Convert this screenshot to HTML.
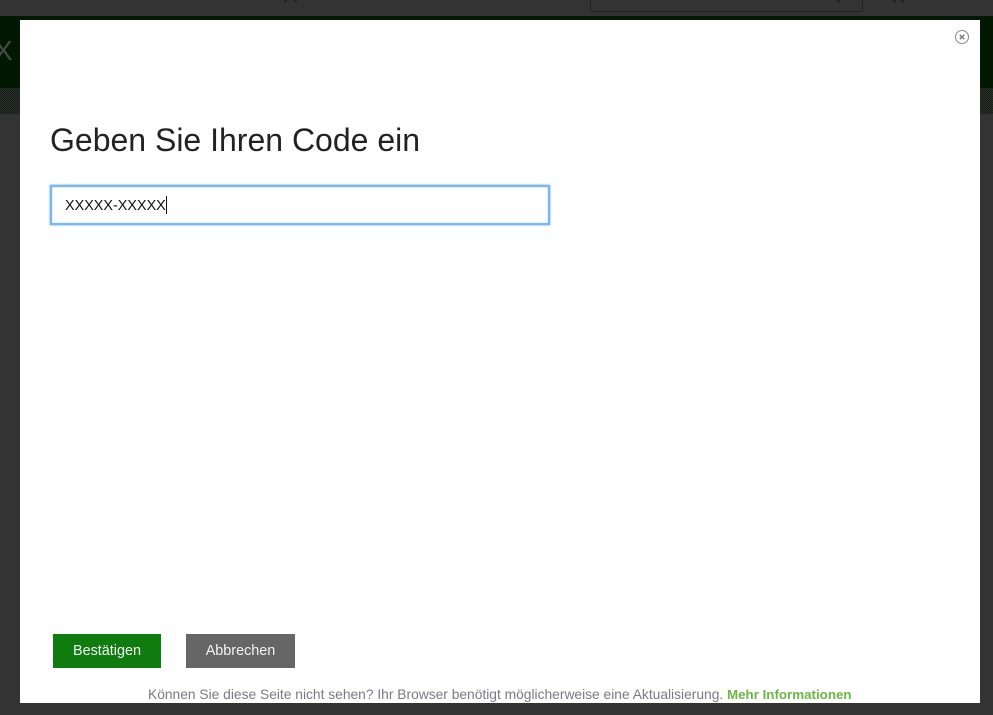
<!DOCTYPE html>
<html lang="de">
<head>
<meta charset="utf-8">
<title>Geben Sie Ihren Code ein</title>
<style>
html,body{margin:0;padding:0;width:993px;height:715px;overflow:hidden;background:#333;font-family:"Liberation Sans",sans-serif}
.abs{position:absolute}
#green{left:0;top:16px;width:993px;height:72px;background:#021802}
#dither{left:0;top:88px;width:993px;height:26px;background-color:#1c241c;background-image:conic-gradient(#282e28 25%,#161e16 0 50%,#282e28 0 75%,#161e16 0);background-size:2px 2px}
#search{left:590px;top:-2px;width:271px;height:12px;border:1px solid #222}
#x{left:-6px;top:35px;font-size:28px;line-height:32px;color:#444a44}
.dot{position:absolute;top:0;width:3px;height:2px;background:#222}
#modal{left:20px;top:20px;width:960px;height:683px;background:#fff;overflow:hidden}
h1{position:absolute;left:30px;top:101px;margin:0;font-weight:400;font-size:32px;line-height:38px;color:#222;white-space:nowrap}
#input{position:absolute;left:30px;top:165px;width:496px;height:36px;border:2px solid #7ab6f5;box-shadow:0 0 1px 1px #b9daf9,inset 0 0 2px #b9daf9;border-radius:1px;background:#fff}
#input span{position:absolute;left:13px;top:9px;font-size:14.4px;line-height:20px;color:#111;white-space:nowrap}
#caret{position:absolute;left:114px;top:9px;width:1px;height:18px;background:#111}
.btn{position:absolute;top:614px;height:34px;line-height:34px;text-align:center;color:#f2f2f2;font-size:14.4px}
#ok{left:33px;width:108px;background:#107c10}
#cancel{left:166px;width:109px;background:#666}
#foot{position:absolute;left:128px;top:666px;font-size:13.8px;line-height:17px;color:#7a7a85;white-space:nowrap}
#foot b{position:absolute;left:579px;top:0;color:#6cb543;font-weight:700;font-size:13.35px}
</style>
</head>
<body>
<div class="abs" id="green"></div>
<div class="abs" id="dither"></div>
<div class="abs" id="search"></div>
<div class="abs" id="x">X</div>
<div class="dot" style="left:284px"></div>
<div class="dot" style="left:294px"></div>
<div class="dot" style="left:837px"></div>
<div class="dot" style="left:893px"></div>
<div class="dot" style="left:901px"></div>
<div class="abs" id="modal">
  <svg style="position:absolute;left:934px;top:9px" width="16" height="16" viewBox="0 0 16 16" fill="none">
    <circle cx="8" cy="8" r="6.5" stroke="#8c8c8c" stroke-width="1.1"/>
    <path d="M5.8 5.8L10.2 10.2M10.2 5.8L5.8 10.2" stroke="#808080" stroke-width="1.5"/>
  </svg>
  <h1>Geben Sie Ihren Code ein</h1>
  <div id="input"><span>XXXXX-XXXXX</span><div id="caret"></div></div>
  <div class="btn" id="ok">Bestätigen</div>
  <div class="btn" id="cancel">Abbrechen</div>
  <div id="foot">Können Sie diese Seite nicht sehen? Ihr Browser benötigt möglicherweise eine Aktualisierung. <b>Mehr Informationen</b></div>
</div>
</body>
</html>
